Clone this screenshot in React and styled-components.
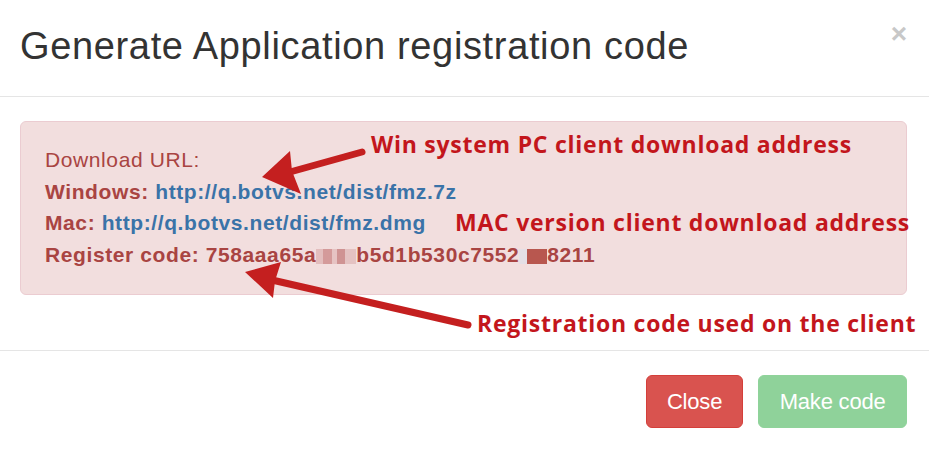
import React from "react";
import styled, { createGlobalStyle } from "styled-components";

const GlobalStyle = createGlobalStyle`
  html, body {
    margin: 0;
    padding: 0;
    background: #ffffff;
  }
  body {
    font-family: "Liberation Sans", Arial, Helvetica, sans-serif;
  }
`;

// modal frame
const Modal = styled.div`
  position: relative;
  width: 929px;
  height: 449px;
  background: #fff;
  overflow: hidden;
`;

const Header = styled.div`
  display: flex;
  justify-content: space-between;
  align-items: center;
  height: 96px;
  padding: 0 22px 0 20px;
  border-bottom: 1px solid #e5e5e5;
`;

const Title = styled.h4`
  margin: -4px 0 0 0;
  font-size: 38px;
  font-weight: 400;
  color: #333;
  letter-spacing: 0.65px;
`;

const CloseX = styled.span`
  align-self: flex-start;
  margin-top: 20px;
  font-size: 28px;
  font-weight: 700;
  line-height: 1;
  color: #c8c8c8;
`;

const Body = styled.div`
  padding: 24px 22px 55px 20px;
  border-bottom: 1px solid #e5e5e5;
`;

const Alert = styled.div`
  padding: 22px 24px 24px 24px;
  background: #f2dede;
  border: 1px solid #ebccd1;
  border-radius: 6px;
  color: #a94442;
  font-size: 21px;
  letter-spacing: 0.6px;
`;

const Line = styled.div`
  line-height: 31.5px;
  white-space: nowrap;
`;

const Label = styled.b`
  font-weight: 700;
`;

const Link = styled.a`
  color: #3a73a8;
  font-weight: 700;
  text-decoration: none;
`;

const Pixels = styled.span`
  display: inline-block;
  vertical-align: -2px;
  height: 15px;
  width: ${(p) => p.$w}px;
  background: ${(p) =>
    p.$dark
      ? "linear-gradient(90deg, #e4dfe6 0 30%, #b8574f 30% 100%)"
      : "linear-gradient(90deg, #e3bdbd 0 18%, #d49a9a 18% 40%, #e6c3c3 40% 52%, #cf9393 52% 72%, #e4c2c2 72% 100%)"};
`;

const Footer = styled.div`
  display: flex;
  justify-content: flex-end;
  gap: 15px;
  padding: 24px 22px 0 0;
`;

const Button = styled.button`
  height: 53px;
  padding: 0 ${(p) => (p.$variant === "danger" ? 20 : 20.5)}px;
  border: 1px solid ${(p) => (p.$variant === "danger" ? "#d43f3a" : "#8fd39a")};
  border-radius: 6px;
  background: ${(p) => (p.$variant === "danger" ? "#d9534f" : "#8fd29a")};
  color: #fff;
  font-family: "Liberation Sans", Arial, sans-serif;
  font-size: 22px;
  letter-spacing: -0.2px;
`;

// annotations laid over the screenshot
const Note = styled.div`
  position: absolute;
  left: ${(p) => p.$x}px;
  top: ${(p) => p.$y}px;
  font-family: "Open Sans", "Noto Sans", sans-serif;
  font-weight: 700;
  font-size: 23px;
  letter-spacing: 0.75px;
  line-height: 1;
  color: #c3161c;
  white-space: nowrap;
`;

const Arrows = styled.svg`
  position: absolute;
  left: 0;
  top: 0;
  pointer-events: none;
`;

const RED = "#c41f1f";

const App = () => {
  return (
    <>
      <GlobalStyle />
      <Modal>
        <Header>
          <Title>Generate Application registration code</Title>
          <CloseX>×</CloseX>
        </Header>
        <Body>
          <Alert>
            <Line>Download URL:</Line>
            <Line>
              <Label>Windows: </Label>
              <Link>http://q.botvs.net/dist/fmz.7z</Link>
            </Line>
            <Line>
              <Label>Mac: </Label>
              <Link>http://q.botvs.net/dist/fmz.dmg</Link>
            </Line>
            <Line>
              <Label>
                Register code: 758aaa65a
                <Pixels $w={40} />
                b5d1b530c7552
                <Pixels $w={28} $dark />
                8211
              </Label>
            </Line>
          </Alert>
        </Body>
        <Footer>
          <Button $variant="danger">Close</Button>
          <Button $variant="success">Make code</Button>
        </Footer>

        <Note $x={371} $y={133}>Win system PC client download address</Note>
        <Note $x={455} $y={211}>MAC version client download address</Note>
        <Note $x={477} $y={312}>Registration code used on the client</Note>

        <Arrows width="929" height="449" viewBox="0 0 929 449">
          <line x1="362" y1="152" x2="290" y2="172" stroke={RED} strokeWidth="7" strokeLinecap="round" />
          <polygon points="262,177 290,151 292,171 301,194" fill={RED} />
          <line x1="468" y1="325" x2="272" y2="280" stroke={RED} strokeWidth="7" strokeLinecap="round" />
          <polygon points="245,272 281,262 275,281 273,298" fill={RED} />
        </Arrows>
      </Modal>
    </>
  );
};

export default App;
